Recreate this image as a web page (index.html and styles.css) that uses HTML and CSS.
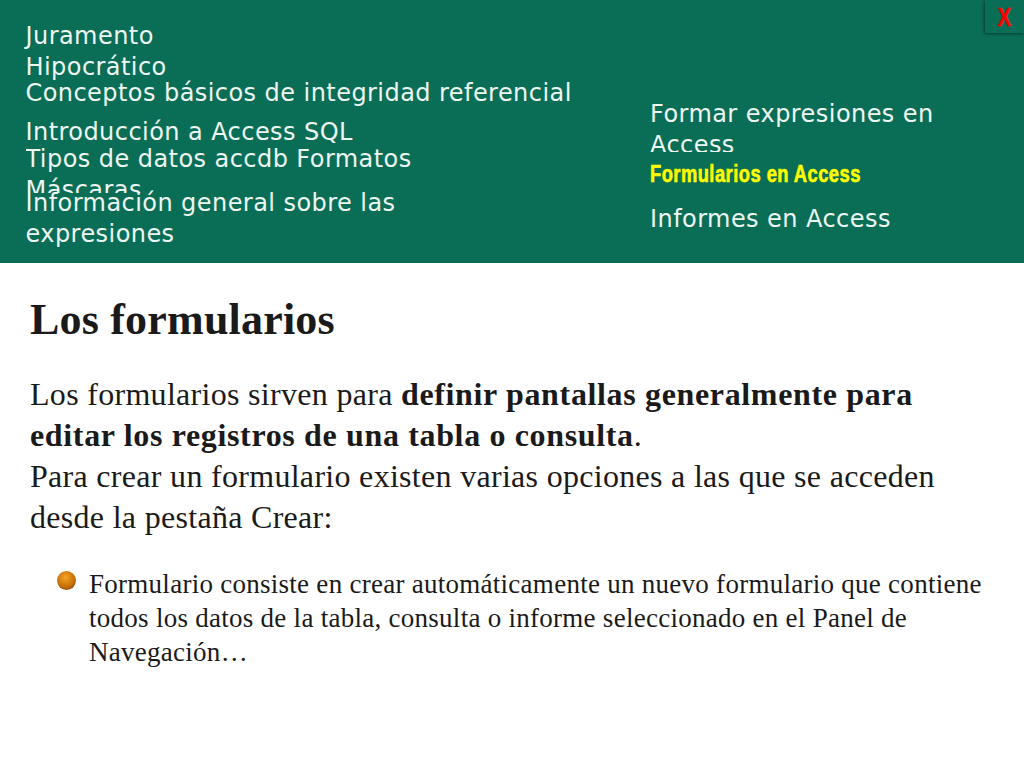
FILE: index.html
```html
<!DOCTYPE html>
<html lang="es">
<head>
    <meta charset="utf-8">
    <title>Los formularios</title>
    <link rel="stylesheet" href="styles.css">
</head>
<body>
<div class="header">
    <div class="menu menu-left">
        <div class="item h57">Juramento<br>Hipocrático</div>
        <div class="item h39">Conceptos básicos de integridad referencial</div>
        <div class="item h27">Introducción a Access SQL</div>
        <div class="item h49 clip">Tipos de datos accdb Formatos<br>Máscaras</div>
        <div class="item">Información general sobre las<br>expresiones</div>
    </div>
    <div class="menu menu-right">
        <div class="item h53 clip">Formar expresiones en<br>Access</div>
        <div class="item h43 current"><span>Formularios en Access</span></div>
        <div class="item">Informes en Access</div>
    </div>
    <div class="close"><span>X</span></div>
</div>
<div class="content">
    <h1>Los formularios</h1>
    <p class="intro">Los formularios sirven para <b>definir pantallas generalmente para editar los registros de una tabla o consulta</b>.<br>
    Para crear un formulario existen varias opciones a las que se acceden desde la pestaña Crear:</p>
    <div class="bullet-row">
        <span class="bullet"></span>
        <p>Formulario consiste en crear automáticamente un nuevo formulario que contiene todos los datos de la tabla, consulta o informe seleccionado en el Panel de Navegación…</p>
    </div>
</div>
</body>
</html>
```

FILE: styles.css
```css
* {
    box-sizing: border-box;
}

body {
    margin: 0;
    background: #fff;
    color: #1a1a1a;
    font-family: "Liberation Serif", serif;
}

.header {
    position: relative;
    display: flex;
    height: 263px;
    background: #0a6e56;
    color: #eef6f2;
    font-family: "DejaVu Sans", sans-serif;
    font-size: 24px;
    letter-spacing: 0.44px;
    line-height: 31px;
}

.menu-left {
    width: 624px;
    padding: 21px 0 0 25.5px;
}

.menu-right {
    padding: 99px 0 0 26px;
}

.item.h57 { height: 57px; }
.item.h39 { height: 39px; }
.item.h27 { height: 27px; }
.item.h49 { height: 49px; margin-bottom: -5px; }
.item.h53 { height: 53px; margin-bottom: 9px; }
.item.h43 { height: 43px; }

.clip {
    overflow: hidden;
}

.current {
    color: #ffff00;
    font-family: "Liberation Sans", sans-serif;
    font-size: 23.5px;
    font-weight: bold;
    letter-spacing: 0.6px;
    line-height: 27px;
}

.current span {
    display: inline-block;
    transform: scaleX(0.78);
    transform-origin: left center;
    -webkit-text-stroke: 0.6px #ffff00;
}

.close {
    position: absolute;
    top: 0;
    right: 0;
    width: 39px;
    height: 33px;
    background: #0a6e56;
    box-shadow: -1px 1px 3px rgba(0, 0, 0, 0.45);
    color: #f00;
    font-family: "Liberation Sans", sans-serif;
    font-size: 25px;
    font-weight: bold;
    letter-spacing: 0;
    line-height: 35px;
    text-align: center;
}

.close span {
    display: inline-block;
    transform: scaleX(0.8);
    -webkit-text-stroke: 0.6px #f00;
}

.content {
    padding: 30px 40px 0 30px;
}

h1 {
    margin: 0 0 27px;
    font-size: 44px;
    font-weight: bold;
    letter-spacing: 0.2px;
    line-height: 54px;
}

.intro {
    margin: 0 0 29px;
    font-size: 32px;
    letter-spacing: 0.3px;
    line-height: 41px;
}

.intro b {
    letter-spacing: 0.65px;
}

.bullet-row {
    display: flex;
    padding-left: 27px;
}

.bullet {
    flex: none;
    width: 19px;
    height: 19px;
    margin: 4px 13px 0 0;
    border-radius: 50%;
    background: radial-gradient(circle at 45% 35%, #f5a623, #c96f08 55%, #5e3303);
}

.bullet-row p {
    margin: 0;
    font-size: 27px;
    letter-spacing: 0.27px;
    line-height: 34px;
}
```
